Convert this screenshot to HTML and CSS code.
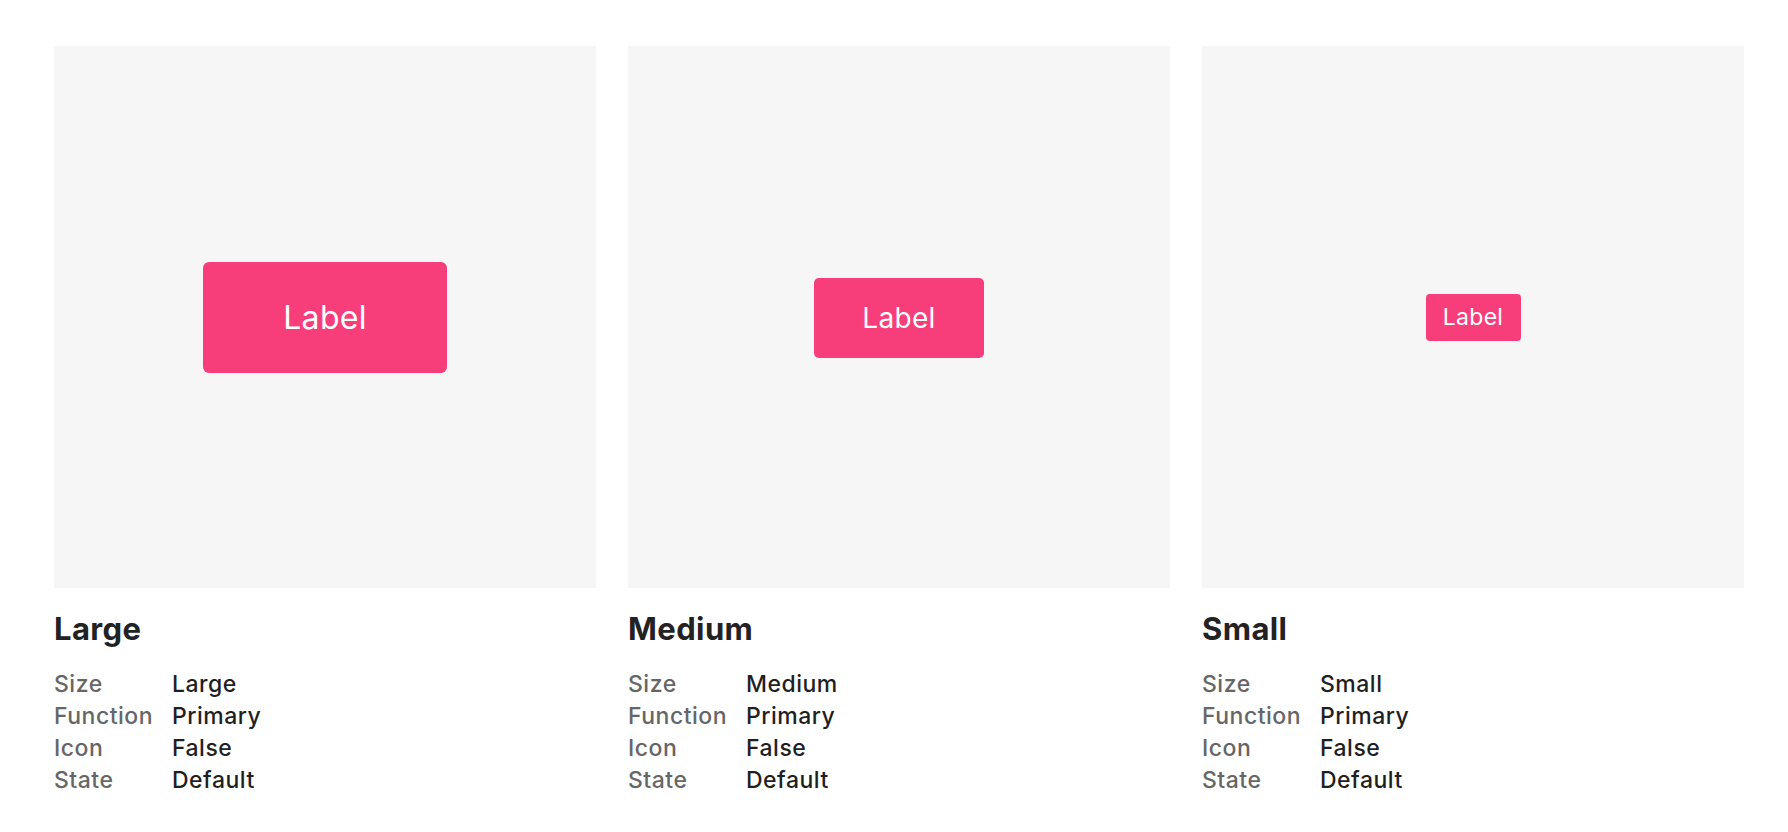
FILE: index.html
```html
<!DOCTYPE html>
<html lang="en">
<head>
    <meta charset="UTF-8">
    <meta name="viewport" content="width=device-width, initial-scale=1.0">
    <title>Button Variants</title>
    <link rel="stylesheet" href="styles.css">
</head>
<body>
    <div class="variants">
        <div class="variant">
            <div class="preview">
                <button type="button" class="btn btn-large">Label</button>
            </div>
            <h2>Large</h2>
            <dl class="props">
                <dt>Size</dt><dd>Large</dd>
                <dt>Function</dt><dd>Primary</dd>
                <dt>Icon</dt><dd>False</dd>
                <dt>State</dt><dd>Default</dd>
            </dl>
        </div>

        <div class="variant">
            <div class="preview">
                <button type="button" class="btn btn-medium">Label</button>
            </div>
            <h2>Medium</h2>
            <dl class="props">
                <dt>Size</dt><dd>Medium</dd>
                <dt>Function</dt><dd>Primary</dd>
                <dt>Icon</dt><dd>False</dd>
                <dt>State</dt><dd>Default</dd>
            </dl>
        </div>

        <div class="variant">
            <div class="preview">
                <button type="button" class="btn btn-small">Label</button>
            </div>
            <h2>Small</h2>
            <dl class="props">
                <dt>Size</dt><dd>Small</dd>
                <dt>Function</dt><dd>Primary</dd>
                <dt>Icon</dt><dd>False</dd>
                <dt>State</dt><dd>Default</dd>
            </dl>
        </div>
    </div>
</body>
</html>
```

FILE: styles.css
```css
body {
    font-family: Inter, 'Noto Sans', sans-serif;
    background-color: #ffffff;
    color: #1f1f1f;
    margin: 0;
}

.variants {
    display: grid;
    grid-template-columns: repeat(3, 542px);
    gap: 32px;
    padding: 46px 44px 0 54px;
}

.preview {
    height: 542px;
    background-color: #f6f6f6;
    display: flex;
    align-items: center;
    justify-content: center;
}

.btn {
    font-family: inherit;
    background-color: #f83e7a;
    color: #ffffff;
    border: none;
    display: flex;
    align-items: center;
    justify-content: center;
    padding: 0;
    cursor: pointer;
    letter-spacing: 0.3px;
}

.btn-large {
    width: 244px;
    height: 111px;
    margin-top: 1px;
    font-size: 32px;
    border-radius: 6px;
}

.btn-medium {
    width: 170px;
    height: 80px;
    margin-top: 1px;
    font-size: 28px;
    border-radius: 5px;
}

.btn-small {
    width: 95px;
    height: 47px;
    font-size: 23px;
    border-radius: 4px;
}

h2 {
    font-size: 31px;
    line-height: 34px;
    font-weight: 700;
    color: #222222;
    margin: 24px 0 22px;
    letter-spacing: 0.4px;
}

.props {
    display: grid;
    grid-template-columns: 118px auto;
    margin: 0;
    font-size: 23px;
    line-height: 32px;
    letter-spacing: 0.5px;
}

.props dt {
    color: #666666;
    font-weight: 500;
}

.props dd {
    margin: 0;
    font-weight: 500;
    color: #1f1f1f;
}
```
